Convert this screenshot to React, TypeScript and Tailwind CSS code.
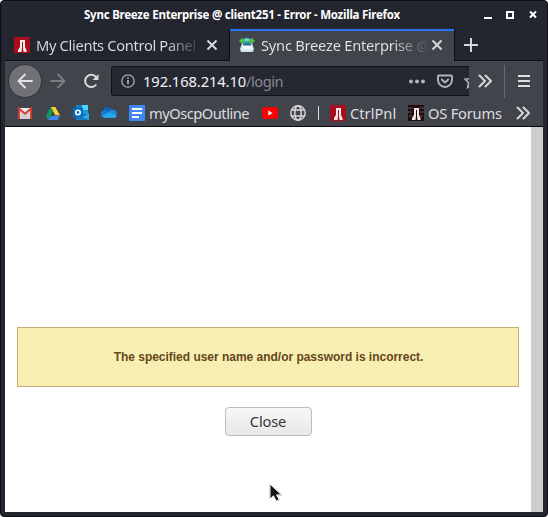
import React from 'react';

function RedTower({ dark = false }: { dark?: boolean }) {
  return (
    <svg width="16" height="16" viewBox="0 0 16 16" className="shrink-0">
      <rect width="16" height="16" fill={dark ? '#210d0f' : '#a80d1c'} />
      {dark && <path d="M0 3h5M11 3h5M0 7h4M12 7h4M1 11h3M12 11h3" stroke="#70575a" strokeWidth="1.2" />}
      <path d="M6 3h5v7l1.5 3v2H9.5L9 11H8l-.5 4H4v-2l2-3z" fill="#f4e7e7" />
      <path d="M8 5h1v6H8z" fill={dark ? '#180b0c' : '#9c1722'} />
    </svg>
  );
}

function Cross() {
  return (
    <svg width="12" height="12" viewBox="0 0 12 12" className="shrink-0" stroke="#d6d6da" strokeWidth="2">
      <path d="M1.5 1.5l9 9m0-9l-9 9" />
    </svg>
  );
}

function Chevrons() {
  return (
    <svg width="14" height="14" viewBox="0 0 14 14" className="shrink-0" fill="none" stroke="#d6d6da" strokeWidth="2" strokeLinecap="round" strokeLinejoin="round">
      <path d="M1.5 1.5L7 7l-5.5 5.5M7.5 1.5L13 7l-5.5 5.5" />
    </svg>
  );
}

function SyncIcon() {
  return (
    <svg width="16" height="16" viewBox="0 0 16 16" className="shrink-0">
      <path d="M3 6h10l2 6-1 3H2l-1-3z" fill="#c5dce3" />
      <path d="M3.5 8h9l1 4h-11z" fill="#f3f8fa" />
      <path d="M4 2q4-3 8 0v5q-4 2-8 0z" fill="#2d8cab" />
      <path d="M6 1.5h4v3H6z" fill="#8bc4d4" />
      <path d="M4 7h8v1.5H4z" fill="#316a88" />
      <path d="M0 4l3.5-3.5V2H6v3.5H3.5V7zM16 4L12.5.5V2H10v3.5h2.5V7z" fill="#4bc543" />
      <path d="M2 12h12v2H2z" fill="#dce9ed" />
    </svg>
  );
}

function TitleBar() {
  return (
    <header className="flex h-[28px] shrink-0 items-center pb-px pl-[79px] font-bold text-white">
      <h1 className="w-[317px] whitespace-nowrap text-[11.5px] leading-4 tracking-[-0.235px]">Sync Breeze Enterprise @ client251 - Error - Mozilla Firefox</h1>
      <svg className="ml-[83px]" width="53" height="12" viewBox="0 0 53 12" fill="none" stroke="white" strokeWidth="2">
        <path d="M0 9h8M46 2.5l6 6m0-6l-6 6" />
        <path d="M23 3h6v6h-6z" />
      </svg>
    </header>
  );
}

function Tabs() {
  return (
    <div className="flex h-[32px] shrink-0">
      <div className="flex w-[224px] items-center border-b border-[#0d0e13] pl-[9px] pt-px">
        <RedTower />
        <span className="ml-[6px] w-[163px] whitespace-nowrap bg-linear-to-r from-[#dddde0] from-80% to-[#30323a] bg-clip-text text-[14.7px] leading-6 tracking-[-0.34px] text-transparent">My Clients Control Panel</span>
        <span className="ml-[7px]"><Cross /></span>
      </div>
      <div className="w-px bg-[#0d0e13]" />
      <div className="flex w-[224px] items-center border-t-2 border-[#2873f5] bg-[#42444b] pb-[2px] pl-[9px]">
        <SyncIcon />
        <span className="ml-[6px] w-[167px] whitespace-nowrap bg-linear-to-r from-[#e4e4e6] from-78% to-[#484a51] bg-clip-text text-[14.7px] leading-6 tracking-[-0.25px] text-transparent">Sync Breeze Enterprise @</span>
        <span className="ml-[3px]"><Cross /></span>
      </div>
      <div className="flex flex-1 items-center border-b border-l border-[#0d0e13] pl-[9px]">
        <svg width="14" height="14" viewBox="0 0 14 14" stroke="#d6d6da" strokeWidth="2"><path d="M0 7h14M7 0v14" /></svg>
      </div>
    </div>
  );
}

function Navigation() {
  return (
    <nav className="flex h-[40px] shrink-0 items-center">
      <span className="ml-[3px] flex size-[34px] shrink-0 items-center justify-center rounded-full border border-[#303238] bg-[#717277]">
        <svg width="16" height="16" viewBox="0 0 16 16" fill="none" stroke="#e1e1df" strokeWidth="2" strokeLinecap="round" strokeLinejoin="round"><path d="M8 1.5L1.5 8 8 14.5M2 8h13" /></svg>
      </span>
      <svg className="ml-[8px] shrink-0" width="16" height="16" viewBox="0 0 16 16" fill="none" stroke="#7b7c81" strokeWidth="2" strokeLinecap="round" strokeLinejoin="round"><path d="M8 1.5L14.5 8 8 14.5M1 8h13" /></svg>
      <svg className="ml-[17px] shrink-0" width="16" height="16" viewBox="0 0 16 16" fill="none" stroke="#d8d8d9" strokeWidth="2"><path d="M13.2 11.5A6.1 6.1 0 1 1 12.4 3.5L14 5" /><path d="M15.5 1v6h-6z" fill="#d8d8d9" stroke="none" /></svg>
      <div className="ml-[12px] flex h-[30px] w-[358px] items-center overflow-hidden rounded-l-[3px] border border-r-0 border-[#101117] bg-[#252731] pl-[9px]">
        <svg width="14" height="14" viewBox="0 0 14 14" fill="none" stroke="#a9abb0" strokeWidth="1.3" className="shrink-0"><circle cx="7" cy="7" r="6.2" /><path d="M7 6v4.2M7 3.2v1.6" strokeWidth="1.8" /></svg>
        <span className="ml-[8px] w-[266px] shrink-0 whitespace-nowrap text-[14.7px] leading-6 tracking-[-0.08px] text-[#f4f4f5]">192.168.214.10<span className="tracking-[-0.5px] text-[#888a91]">/login</span></span>
        <svg width="16" height="5" viewBox="0 0 16 5" className="shrink-0" fill="#b2b3b7"><circle cx="2" cy="2.5" r="2" /><circle cx="8" cy="2.5" r="2" /><circle cx="14" cy="2.5" r="2" /></svg>
        <svg width="16" height="15" viewBox="0 0 16 15" className="ml-[12px] shrink-0" fill="none" stroke="#b2b3b7" strokeWidth="1.9" strokeLinejoin="round" strokeLinecap="round"><path d="M2 1.5h12q1 0 1 1V6a7 7 0 0 1-14 0V2.5q0-1 1-1z" /><path d="M4.8 5.5L8 8.7l3.2-3.2" /></svg>
        <svg width="16" height="16" viewBox="0 0 16 16" className="ml-[11px] shrink-0" fill="none" stroke="#b2b3b7" strokeWidth="1.6"><path d="M8 1l2.1 4.6 5 .6-3.7 3.4 1 5L8 12.1l-4.4 2.5 1-5L1 6.2l5-.6z" /></svg>
      </div>
      <span className="ml-[9px]"><Chevrons /></span>
      <span className="ml-[12px] h-[33px] w-px bg-[#686a70]" />
      <svg className="ml-[13px]" width="12" height="12" viewBox="0 0 12 12" stroke="#dddddf" strokeWidth="2"><path d="M0 1h12M0 6h12M0 11h12" /></svg>
    </nav>
  );
}

function Bookmarks() {
  return (
    <div className="flex h-[25px] shrink-0 items-center pb-[2px] pl-[13px] text-[14.7px] leading-6 text-[#dddde0]">
      <svg width="14" height="12" viewBox="0 0 14 12" className="mt-px shrink-0"><path d="M0 1h14v11H0z" fill="#e9e9e9" /><path d="M2.5 12V5L7 8l4.5-3v7" fill="#cfcfd0" /><path d="M1 12V1.7L7 6.8l6-5.1V12" fill="none" stroke="#d43b31" strokeWidth="2" /></svg>
      <svg width="14" height="13" viewBox="0 0 14 13" className="ml-[14px] mt-px shrink-0"><path d="M4.7 0h4.6L14 8.3H9.3z" fill="#ffcf35" /><path d="M4.7 0L7 4.1 2.3 13 0 8.7z" fill="#0f9d58" /><path d="M4.7 8.7H14L11.7 13H2.3z" fill="#4285f4" /></svg>
      <svg width="16" height="16" viewBox="0 0 16 16" className="ml-[13px] mt-px shrink-0"><path d="M3 0h12v11H3z" fill="#0868b8" /><path d="M3 0h6v4H3z" fill="#137fd0" /><path d="M9 0h6v5H9z" fill="#50d5fa" /><path d="M9 5h6v4H9z" fill="#169bdc" /><path d="M3 9l6 3 7-4v7H3z" fill="#2eaae0" /><path d="M3 9l13 6H3z" fill="#147cc2" /><rect y="2.5" width="10" height="10" rx=".7" fill="#086cc1" /><circle cx="5" cy="7.5" r="2.2" fill="none" stroke="white" strokeWidth="1.6" /></svg>
      <svg width="16" height="11" viewBox="0 0 16 11" className="ml-[12px] shrink-0"><circle cx="6.5" cy="5" r="4.8" fill="#0b65bd" /><circle cx="3.8" cy="7" r="3.8" fill="#187dcc" /><circle cx="11.7" cy="6.8" r="4" fill="#178ed9" /><path d="M1 9l7-4 8 4-2 1.9H4z" fill="#28a7e9" /></svg>
      <svg width="16" height="16" viewBox="0 0 16 16" className="ml-[12px] shrink-0"><rect width="16" height="16" rx="1" fill="#4287f5" /><path d="M3 4h10M3 8h10M3 12h7" stroke="white" strokeWidth="1.8" /></svg>
      <span className="ml-[4px] w-[113px] shrink-0 whitespace-nowrap tracking-[-0.5px]">myOscpOutline</span>
      <svg width="16" height="12" viewBox="0 0 16 12" className="shrink-0"><rect width="16" height="12" rx="3" fill="#ff0000" /><path d="M6.3 3.5v5l4.3-2.5z" fill="white" /></svg>
      <svg width="16" height="16" viewBox="0 0 16 16" className="ml-[12px] shrink-0" fill="none" stroke="#d6d6da" strokeWidth="1.5"><circle cx="8" cy="8" r="7.2" /><ellipse cx="8" cy="8" rx="3.2" ry="7.2" /><path d="M1.7 5h12.6M1.7 11h12.6" /></svg>
      <span className="ml-[12px] h-[14px] w-px shrink-0 bg-[#dddde0]" />
      <span className="ml-[11px]"><RedTower /></span>
      <span className="ml-[4px] w-[58px] shrink-0 whitespace-nowrap">CtrlPnl</span>
      <RedTower dark />
      <span className="ml-[4px] w-[88px] shrink-0 whitespace-nowrap tracking-[-0.22px]">OS Forums</span>
      <Chevrons />
    </div>
  );
}

export default function App() {
  return (
    <div className="h-[517px] w-[548px] bg-white font-['Noto_Sans','Open_Sans',sans-serif]">
      <div className="flex h-full flex-col overflow-hidden rounded-[4px] border border-[#0d0e13] bg-[#23252f] px-1 pb-1">
        <TitleBar />
        <Tabs />
        <div className="flex h-[66px] shrink-0 flex-col border-b border-[#07080b] bg-[#42444b]"><Navigation /><Bookmarks /></div>
        <main className="flex min-h-0 flex-1 bg-white">
          <div className="flex flex-1 flex-col px-3 pt-[200px]">
            <div className="flex h-[60px] shrink-0 items-center justify-center border border-[#c4ac76] bg-[#f7efb2] pl-px font-['Liberation_Sans',Arial,sans-serif] text-[12px] font-bold tracking-[-0.02px] text-[#67451d]">The specified user name and/or password is incorrect.</div>
            <button className="mt-[20px] h-[29px] w-[87px] shrink-0 self-center rounded-[4px] border border-[#bebbb8] bg-linear-to-b from-[#f7f7f6] to-[#e9e8e7] pb-px text-[14.7px] leading-6 tracking-[-0.2px] text-[#32383d]">Close</button>
            <svg className="ml-[252px] mt-[47px] shrink-0" width="13" height="20" viewBox="0 0 13 20"><path d="M1 1v15l3.5-3.2L7.2 18l3-1.3-2.6-4.8h4.9z" fill="#151515" stroke="white" strokeWidth="1" style={{ filter: 'drop-shadow(0 0 .5px #777)' }} /></svg>
          </div>
          <div className="w-[12px] shrink-0 bg-[#cdcdcd]" />
        </main>
      </div>
    </div>
  );
}
